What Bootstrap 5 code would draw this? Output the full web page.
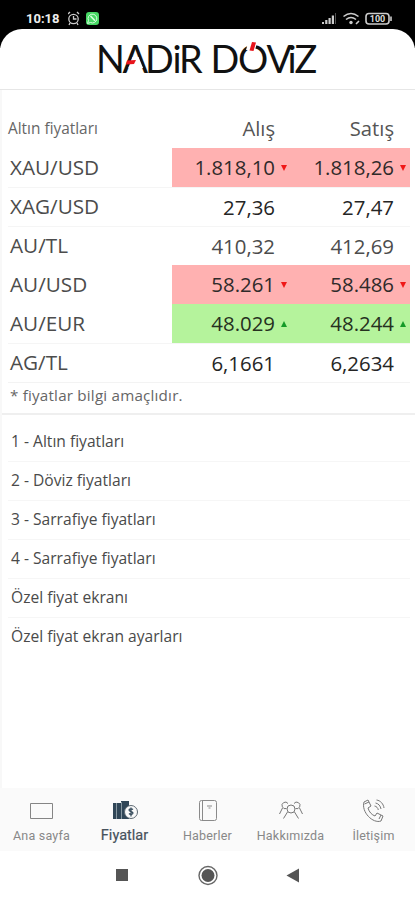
<!DOCTYPE html>
<html lang="tr">
<head>
<meta charset="utf-8">
<meta name="viewport" content="width=device-width, initial-scale=1">
<title>Nadir Döviz</title>
<link href="https://cdn.jsdelivr.net/npm/bootstrap@5.3.0/dist/css/bootstrap.min.css" rel="stylesheet">
<style>
body{font-family:"Open Sans","Noto Sans",sans-serif;background:#fff;color:#4c4c4c;width:415px;height:900px;overflow:hidden}
.status{height:48px;background:#000;padding:11px 22px 0 26px;font:700 13px/15px Roboto,sans-serif;color:#eee}
.brand-bar{height:61px;margin-top:-19px;background:#fff;border-radius:22px 22px 0 0;border-bottom:1px solid #e6e6e6;position:relative}
.brand-bar svg{display:block}
.sheet{border-left:2px solid #f8f8f8}
.prices{padding:9px 5px 0 6px;height:325px;border-bottom:2px solid #efefef}
.price-head{height:49px;padding-top:10px;font-size:15.4px;color:#666}
.price-head .val{font-size:20.2px;color:#555}
.price-row{height:39px;border-top:1px solid #f5f5f5;font-size:20.4px}
.price-row .name{padding-left:2px;font-size:20.7px}
.name{width:164px}
.val{width:119px;padding-right:16px;text-align:right;position:relative}
.dark{color:#252525}
.down,.up{border:0;color:#2f2a2a}
.down .val{background:#ffb1b1}
.up .val{background:#b5f39c;color:#263020}
.down .val,.up .val{height:39px;line-height:38px}
.price-row.down .name,.price-row.up .name{color:#4c4c4c}
.down .val::after,.up .val::after{content:"";position:absolute;right:4px;top:17px;border:3px solid transparent}
.down .val::after{border-top:6px solid #f01818;border-bottom:0}
.up .val::after{border-bottom:6px solid #159a28;border-top:0}
.note{height:31px;border-top:1px solid #f3f3f3;font-size:15.2px;padding:0 0 0 2px;letter-spacing:.2px;line-height:24px;color:#666}
.links{padding:8px 5px 0 6px}
.links .list-group-item{height:39px;padding:0 3px;border-color:#f6f6f6;font-size:15.6px;line-height:37px;color:#4a4a4a;background:none}
.tabs{height:63px;background:#fafafa;font:12.5px/15px Roboto,sans-serif;color:#888;letter-spacing:.2px}
.tabs a{color:inherit;text-decoration:none;width:83px;padding-top:11px}
.tabs svg{display:block;margin:0 auto 5px}
.tabs .chosen{font-size:14.5px;color:#46525c;letter-spacing:0;-webkit-text-stroke:.2px #46525c}
.system{height:49px}
</style>
<script src="https://cdn.jsdelivr.net/npm/bootstrap@5.3.0/dist/js/bootstrap.bundle.min.js"></script>
</head>
<body class="d-flex flex-column">
<header>
<div class="status d-flex justify-content-between">
<div class="d-flex"><span>10:18</span>
<svg class="ms-2" width="34" height="15" viewBox="1 0 34 15"><g fill="none" stroke="#ccc" stroke-width="1.3"><circle cx="6.500" cy="8" r="4.700"/><path d="M1 3 3 1M10 1 12 3M6.500 5v3h3M3 12 2 14M10 12l1 2"/></g><rect x="19" y="1" width="13" height="13" rx="3" fill="#47d764"/><path d="m20.500 12.500 1-3a4.400 4.400 0 1 1 2 2z" fill="none" stroke="#d9ffe0"/><path d="m23.500 5 4.500 4.800" stroke="#d9ffe0" stroke-width="1.600"/></svg></div>
<svg width="72" height="15" viewBox="0 0 72 15"><g fill="#ccc"><path d="M1 11h2v2H1zM4.200 9h2.200v4H4.200zM7.500 7h2.200v6H7.500zM10.800 4.500H13V13h-2.200z"/><path d="M14 2h1v11h-1z" opacity=".4"/><circle cx="30" cy="11.500" r="1.700"/></g><g fill="none" stroke="#ccc" stroke-width="1.600"><path d="M22.500 5.500q7.500-6 15 0M25 8.500q5-4 10 0M35 13l3-3"/><rect x="45" y="2.500" width="23" height="10.500" rx="3"/><path d="M70 5.500v4.500"/></g><text x="56.500" y="11.200" text-anchor="middle" font-family="Roboto, sans-serif" font-weight="700" font-size="9" fill="#ddd">100</text></svg>
</div>
<div class="brand-bar">
<svg width="415" height="60" viewBox="0 29 415 60"><g font-family="Lato, sans-serif" font-size="37.800" fill="#111"><text x="96 122.500 145 172.500 179" y="72.500">NADiR</text><text x="210.500 238 266.500 287.500 294.500" y="72.500">DOViZ</text></g><path d="M132.500 57h6l4.600 11h-14.800z" fill="#fff"/><path d="m127 60.500 9-.5-2 4-8 .5z" fill="#e8141c"/><path d="M248 43h9l-2 7h-9z" fill="#fff"/><path d="m252 42 4 .5-2.500 8.500-4-.5z" fill="#e8141c"/></svg>
</div>
</header>
<main class="sheet flex-grow-1">
<section class="prices">
<div class="price-head d-flex align-items-center"><div class="name">Altın fiyatları</div><div class="val">Alış</div><div class="val">Satış</div></div>
<div class="price-row down d-flex align-items-center"><div class="name">XAU/USD</div><div class="val">1.818,10</div><div class="val">1.818,26</div></div>
<div class="price-row d-flex align-items-center"><div class="name">XAG/USD</div><div class="val dark">27,36</div><div class="val dark">27,47</div></div>
<div class="price-row d-flex align-items-center"><div class="name">AU/TL</div><div class="val">410,32</div><div class="val">412,69</div></div>
<div class="price-row down d-flex align-items-center"><div class="name">AU/USD</div><div class="val">58.261</div><div class="val">58.486</div></div>
<div class="price-row up d-flex align-items-center"><div class="name">AU/EUR</div><div class="val">48.029</div><div class="val">48.244</div></div>
<div class="price-row d-flex align-items-center"><div class="name">AG/TL</div><div class="val dark">6,1661</div><div class="val dark">6,2634</div></div>
<div class="note">* fiyatlar bilgi amaçlıdır.</div>
</section>
<nav class="links"><div class="list-group list-group-flush">
<a class="list-group-item">1 - Altın fiyatları</a><a class="list-group-item">2 - Döviz fiyatları</a><a class="list-group-item">3 - Sarrafiye fiyatları</a><a class="list-group-item">4 - Sarrafiye fiyatları</a><a class="list-group-item">Özel fiyat ekranı</a><a class="list-group-item">Özel fiyat ekran ayarları</a>
</div></nav>
</main>
<nav class="tabs d-flex text-center flex-shrink-0">
<a><svg width="26" height="24" fill="none" stroke="#858585"><path d="M1.500 4.500h22v15h-22z"/></svg>Ana sayfa</a>
<a class="chosen"><svg width="28" height="24" viewBox="0 0 28 24"><path d="M2 4h8V2h8v18H2z" fill="#304657"/><path d="M5.500 4v16M10.500 3v17" stroke="#8797a1"/><circle cx="20" cy="13" r="6.500" fill="#fafafa" stroke="#5d6972"/><path d="M22 10.500c-1-1-4-1-4 .6 0 2 4 1 4 3 0 1.600-3 1.600-4 .4M20 8.500v9" fill="none" stroke="#304657" stroke-width="1.200"/></svg>Fiyatlar</a>
<a><svg width="20" height="24" fill="none" stroke="#8a8a8a"><rect x="1.500" y="1.500" width="17" height="20" rx="2"/><path d="M4.500 2v19M9 7h5M10.500 9h2"/></svg>Haberler</a>
<a><svg width="26" height="24" viewBox="0 0 26 24" fill="none" stroke="#777"><circle cx="13" cy="10" r="4"/><path d="M8.500 9.500a3.300 3.300 0 1 1 1.500-5M17.500 9.500a3.300 3.300 0 1 0-1.500-5M4.500 9 1.500 15M21.500 9l3 6M9.500 13l-4 6.500M16.500 13l4 6.500"/></svg>Hakkımızda</a>
<a><svg width="24" height="24" viewBox="0 0 24 24" fill="none" stroke="#777"><path d="m2 3 4-2 3 6-3 2c1 4 4 7 7 8l2-3 6 3-2 5C11 25-1 13 2 3ZM2.500 5 7 3M17 20l2-4M12.500 7c2 .3 3.500 2 3.800 4M13.500 4c3 .5 5 3 5.500 6M14.500 1c4 .5 7 4 7.500 8"/></svg>İletişim</a>
</nav>
<footer class="system flex-shrink-0"><svg width="415" height="49" fill="#555"><path d="M116 18h12v12h-12z"/><circle cx="208" cy="24.500" r="6.500"/><circle cx="208" cy="24.500" r="9" fill="none" stroke="#666" stroke-width="1.400"/><path d="M299 17.500v14L286.500 24.500z"/></svg></footer>
</body>
</html>
